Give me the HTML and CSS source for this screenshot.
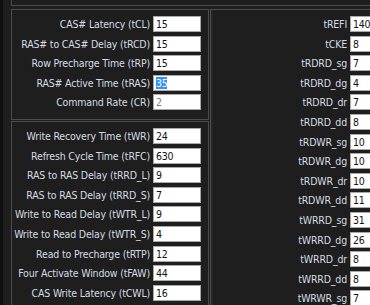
FILE: index.html
```html
<!DOCTYPE html>
<html>
<head>
<meta charset="utf-8">
<link rel="stylesheet" href="styles.css">
</head>
<body>
<div class="screen">
  <div class="prev"></div>
  <div class="main">
    <div class="leftcol">
      <div class="group g1">
        <div class="row"><span class="lbl">CAS# Latency (tCL)</span><span class="inp">15</span></div>
        <div class="row"><span class="lbl">RAS# to CAS# Delay (tRCD)</span><span class="inp">15</span></div>
        <div class="row"><span class="lbl">Row Precharge Time (tRP)</span><span class="inp">15</span></div>
        <div class="row"><span class="lbl">RAS# Active Time (tRAS)</span><span class="inp"><span class="sel">35</span></span></div>
        <div class="row"><span class="lbl">Command Rate (CR)</span><span class="inp dis">2</span></div>
      </div>
      <div class="group g2">
        <div class="row"><span class="lbl">Write Recovery Time (tWR)</span><span class="inp">24</span></div>
        <div class="row"><span class="lbl">Refresh Cycle Time (tRFC)</span><span class="inp">630</span></div>
        <div class="row"><span class="lbl">RAS to RAS Delay (tRRD_L)</span><span class="inp">9</span></div>
        <div class="row"><span class="lbl">RAS to RAS Delay (tRRD_S)</span><span class="inp">7</span></div>
        <div class="row"><span class="lbl">Write to Read Delay (tWTR_L)</span><span class="inp">9</span></div>
        <div class="row"><span class="lbl">Write to Read Delay (tWTR_S)</span><span class="inp">4</span></div>
        <div class="row"><span class="lbl">Read to Precharge (tRTP)</span><span class="inp">12</span></div>
        <div class="row"><span class="lbl">Four Activate Window (tFAW)</span><span class="inp">44</span></div>
        <div class="row"><span class="lbl">CAS Write Latency (tCWL)</span><span class="inp">16</span></div>
      </div>
    </div>
    <div class="group g3">
      <div class="row"><span class="lbl">tREFI</span><span class="inp">14095</span></div>
      <div class="row"><span class="lbl">tCKE</span><span class="inp">8</span></div>
      <div class="row"><span class="lbl">tRDRD_sg</span><span class="inp">7</span></div>
      <div class="row"><span class="lbl">tRDRD_dg</span><span class="inp">4</span></div>
      <div class="row"><span class="lbl">tRDRD_dr</span><span class="inp">7</span></div>
      <div class="row"><span class="lbl">tRDRD_dd</span><span class="inp">8</span></div>
      <div class="row"><span class="lbl">tRDWR_sg</span><span class="inp">10</span></div>
      <div class="row"><span class="lbl">tRDWR_dg</span><span class="inp">10</span></div>
      <div class="row"><span class="lbl">tRDWR_dr</span><span class="inp">10</span></div>
      <div class="row"><span class="lbl">tRDWR_dd</span><span class="inp">11</span></div>
      <div class="row"><span class="lbl">tWRRD_sg</span><span class="inp">31</span></div>
      <div class="row"><span class="lbl">tWRRD_dg</span><span class="inp">26</span></div>
      <div class="row"><span class="lbl">tWRRD_dr</span><span class="inp">8</span></div>
      <div class="row"><span class="lbl">tWRRD_dd</span><span class="inp">8</span></div>
      <div class="row"><span class="lbl">tWRWR_sg</span><span class="inp">7</span></div>
    </div>
  </div>
</div>
</body>
</html>
```
FILE: styles.css
```css
html, body {
  margin: 0;
  padding: 0;
  background: #1d1d1d;
}
.screen {
  width: 370px;
  height: 305px;
  overflow: hidden;
  background: #1e1e1e;
  border-left: 3px solid #0e0e0e;
  box-sizing: border-box;
  padding-left: 8px;
  font-family: "DejaVu Sans Condensed", "DejaVu Sans", sans-serif;
  font-stretch: condensed;
  font-size: 10.5px;
  letter-spacing: -0.17px;
  color: #d4dde2;
}
.prev {
  height: 5px;
  border-left: 1px solid #4a4a4a;
  border-bottom: 1px solid #4a4a4a;
  margin-bottom: 3px;
}
.main {
  display: flex;
  align-items: flex-start;
}
.leftcol {
  display: flex;
  flex-direction: column;
  gap: 1px;
  width: 198px;
  flex: none;
}
.group {
  border: 1px solid #4d4d4d;
  display: flex;
  flex-direction: column;
  gap: 3.6px;
  padding: 6px 7px 7px 0;
  overflow: hidden;
}
.g1 { height: 111px; box-sizing: border-box; }
.g2 { height: 200px; box-sizing: border-box; }
.g3 {
  margin-left: 1px;
  width: 200px;
  flex: none;
  height: 320px;
  padding-right: 0;
  box-sizing: border-box;
  border-left: 1px solid #4d4d4d;
  box-shadow: inset 2px 0 0 #262626;
}
.row {
  display: flex;
  justify-content: flex-end;
  align-items: center;
  height: 16px;
  flex: none;
}
.g3 .row {
  justify-content: flex-start;
}
.g3 .lbl {
  width: 136px;
  flex: none;
  text-align: right;
}
.lbl {
  white-space: nowrap;
  margin-right: 3px;
}
.inp {
  width: 48px;
  height: 16px;
  box-sizing: border-box;
  background: #ffffff;
  border: 1px solid #a9a9a9;
  color: #101018;
  padding-left: 2px;
  line-height: 14px;
  flex: none;
  overflow: hidden;
  white-space: nowrap;
  letter-spacing: -0.3px;
}
.inp.dis {
  color: #7a7a7a;
}
.sel {
  background: #3390ff;
  color: #ffffff;
}
```
